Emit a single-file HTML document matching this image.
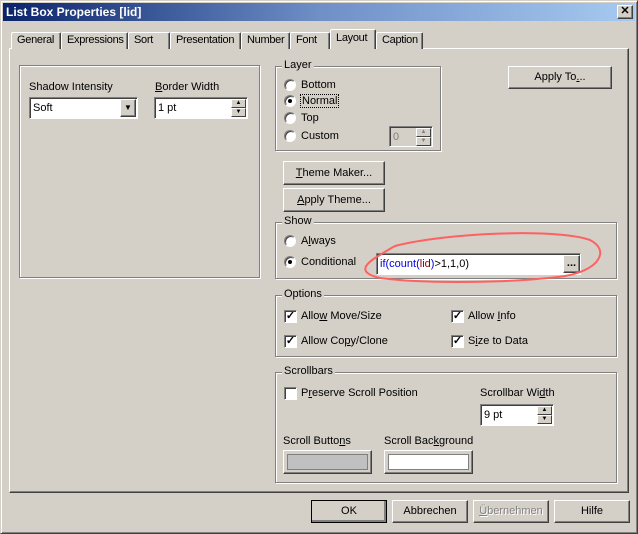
<!DOCTYPE html>
<html><head><meta charset="utf-8">
<style>
*{box-sizing:border-box;margin:0;padding:0}
body{width:638px;height:534px;overflow:hidden;background:#d4d0c8;font-family:"Liberation Sans",Tahoma,sans-serif;font-size:11px;color:#000;position:relative}
.a{position:absolute}
.win{left:0;top:0;width:638px;height:534px;border-top:1px solid #d4d0c8;border-left:1px solid #d4d0c8;border-right:1px solid #404040;border-bottom:1px solid #404040;box-shadow:inset 1px 1px 0 #fff,inset -1px -1px 0 #808080}
.title{left:3px;top:3px;width:632px;height:18px;background:linear-gradient(90deg,#0a246a,#a6caf0);color:#fff;font-weight:bold;font-size:12px;line-height:18px;padding-left:3px}
.xbtn{right:5px;top:5px;width:16px;height:14px;background:#d4d0c8;border:1px solid;border-color:#fff #404040 #404040 #fff;box-shadow:inset -1px -1px 0 #808080;font-size:11px;line-height:11px;text-align:center;font-weight:bold;color:#000}
.panel{left:9px;top:48px;width:620px;height:445px;border:1px solid;border-color:#fff #404040 #404040 #fff;box-shadow:inset -1px -1px 0 #808080}
.tab{top:32px;height:17px;border:1px solid;border-bottom:none;border-color:#fff #404040 #404040 #fff;box-shadow:inset -1px 0 0 #808080;padding:1px 0 0 5px;border-radius:2px 2px 0 0;background:#d4d0c8;letter-spacing:-0.3px;white-space:nowrap;overflow:hidden}
.tab.sel{top:29px;height:20px;z-index:2}
.grp{border:1px solid #808080;box-shadow:1px 1px 0 #fff,inset 1px 1px 0 #fff}
.lg{background:#d4d0c8;padding:0 2px;top:-8px;left:6px;position:absolute}
.btn{border:1px solid;border-color:#fff #404040 #404040 #fff;box-shadow:inset -1px -1px 0 #808080;text-align:center;background:#d4d0c8}
.sunk{border:1px solid;border-color:#808080 #fff #fff #808080;box-shadow:inset 1px 1px 0 #404040;background:#fff;padding:4px 3px 0}
.radio{width:12px;height:12px;border-radius:50%;background:#fff;border:1px solid;border-color:#808080 #fff #fff #808080;box-shadow:inset 1px 1px 0 #404040}
.radio.on::after{content:"";position:absolute;left:3px;top:3px;width:4px;height:4px;border-radius:50%;background:#000}
.cb{width:13px;height:13px;background:#fff;border:1px solid;border-color:#808080 #fff #fff #808080;box-shadow:inset 1px 1px 0 #404040;font-size:11px;line-height:10px;text-align:center;font-weight:bold}
u{text-decoration:underline}
.sb{width:15px;height:9px;border:1px solid;border-color:#fff #404040 #404040 #fff;background:#d4d0c8;font-size:6px;line-height:6px;text-align:center}
</style></head><body>
<div class="a win"></div>
<div class="a title" style="background:linear-gradient(90deg,#0a246a,#6f8fc7 50%,#a6caf0)">List Box Properties [lid]</div>
<div class="a xbtn">✕</div>

<div class="a panel"></div>
<div class="a tab" style="left:11px;width:50px">General</div>
<div class="a tab" style="left:61px;width:67px">Expressions</div>
<div class="a tab" style="left:128px;width:42px">Sort</div>
<div class="a tab" style="left:170px;width:71px">Presentation</div>
<div class="a tab" style="left:241px;width:49px">Number</div>
<div class="a tab" style="left:290px;width:40px">Font</div>
<div class="a tab sel" style="left:330px;width:46px;padding-top:2px">Layout</div>
<div class="a tab" style="left:376px;width:47px">Caption</div>

<div class="a grp" style="left:19px;top:65px;width:241px;height:213px"></div>
<div class="a" style="left:29px;top:81px">Shadow Intensity</div>
<div class="a sunk" style="left:29px;top:97px;width:109px;height:22px">Soft</div>
<div class="a btn" style="left:120px;top:99px;width:16px;height:18px;font-size:8px;line-height:16px">▼</div>
<div class="a" style="left:155px;top:81px"><u>B</u>order Width</div>
<div class="a sunk" style="left:154px;top:97px;width:94px;height:22px">1 pt</div>
<div class="a sb" style="left:231px;top:99px">▲</div>
<div class="a sb" style="left:231px;top:108px">▼</div>

<div class="a grp" style="left:275px;top:66px;width:166px;height:85px"><span class="lg">Layer</span></div>
<div class="a radio" style="left:284px;top:79px"></div><div class="a" style="left:301px;top:79px">Bottom</div>
<div class="a radio on" style="left:284px;top:95px"></div><div class="a" style="left:300px;top:94px;border:1px dotted #000;padding:0 1px">Normal</div>
<div class="a radio" style="left:284px;top:112px"></div><div class="a" style="left:301px;top:112px">Top</div>
<div class="a radio" style="left:284px;top:130px"></div><div class="a" style="left:301px;top:130px">Custom</div>
<div class="a sunk" style="left:389px;top:126px;width:44px;height:21px;background:#d4d0c8;color:#808080">0</div>
<div class="a sb" style="left:416px;top:128px;color:#808080">▲</div>
<div class="a sb" style="left:416px;top:137px;color:#808080">▼</div>

<div class="a btn" style="left:508px;top:66px;width:104px;height:23px;line-height:21px">Apply To<u>.</u>..</div>
<div class="a btn" style="left:283px;top:161px;width:102px;height:24px;line-height:22px"><u>T</u>heme Maker...</div>
<div class="a btn" style="left:283px;top:188px;width:102px;height:24px;line-height:22px"><u>A</u>pply Theme...</div>

<div class="a grp" style="left:275px;top:222px;width:342px;height:57px"><span class="lg">Show</span></div>
<div class="a radio" style="left:284px;top:235px"></div><div class="a" style="left:301px;top:235px">A<u>l</u>ways</div>
<div class="a radio on" style="left:284px;top:256px"></div><div class="a" style="left:301px;top:256px">Conditional</div>
<div class="a sunk" style="left:376px;top:253px;width:205px;height:22px"><span style="color:#0000e0">if(count(</span><span style="color:#800000">lid</span><span style="color:#0000e0">)</span>&gt;1,1,0)</div>
<div class="a btn" style="left:563px;top:255px;width:17px;height:18px;font-weight:bold;line-height:14px">...</div>
<svg class="a" style="left:355px;top:228px" width="255" height="58"><path d="M40 18 C90 5 200 0 235 12 C255 22 245 42 210 48 C160 55 70 56 25 50 C8 46 5 40 20 30 C30 24 36 20 40 18" fill="none" stroke="#ff6060" stroke-width="2"/></svg>

<div class="a grp" style="left:275px;top:295px;width:342px;height:62px"><span class="lg">Options</span></div>
<div class="a cb" style="left:284px;top:310px">✓</div><div class="a" style="left:301px;top:310px">Allo<u>w</u> Move/Size</div>
<div class="a cb" style="left:284px;top:335px">✓</div><div class="a" style="left:301px;top:335px">Allow Co<u>p</u>y/Clone</div>
<div class="a cb" style="left:451px;top:310px">✓</div><div class="a" style="left:468px;top:310px">Allow <u>I</u>nfo</div>
<div class="a cb" style="left:451px;top:335px">✓</div><div class="a" style="left:468px;top:335px">S<u>i</u>ze to Data</div>

<div class="a grp" style="left:275px;top:372px;width:342px;height:111px"><span class="lg">Scrollbars</span></div>
<div class="a cb" style="left:284px;top:387px"></div><div class="a" style="left:301px;top:387px">P<u>r</u>eserve Scroll Position</div>
<div class="a" style="left:480px;top:387px">Scrollbar Wi<u>d</u>th</div>
<div class="a sunk" style="left:480px;top:404px;width:74px;height:22px">9 pt</div>
<div class="a sb" style="left:537px;top:406px">▲</div>
<div class="a sb" style="left:537px;top:415px">▼</div>
<div class="a" style="left:283px;top:435px">Scroll Butto<u>n</u>s</div>
<div class="a btn" style="left:283px;top:450px;width:89px;height:24px;padding:3px"><div style="border:1px solid #808080;background:#c0c0c0;height:100%"></div></div>
<div class="a" style="left:384px;top:435px">Scroll Bac<u>k</u>ground</div>
<div class="a btn" style="left:384px;top:450px;width:89px;height:24px;padding:3px"><div style="border:1px solid #808080;background:#fff;height:100%"></div></div>

<div class="a btn" style="left:311px;top:500px;width:76px;height:23px;line-height:20px;outline:1px solid #000;outline-offset:-1px;box-shadow:inset -2px -2px 0 #808080">OK</div>
<div class="a btn" style="left:392px;top:500px;width:76px;height:23px;line-height:21px">Abbrechen</div>
<div class="a btn" style="left:473px;top:500px;width:76px;height:23px;line-height:21px;color:#808080;text-shadow:1px 1px 0 #fff"><u>Ü</u>bernehmen</div>
<div class="a btn" style="left:554px;top:500px;width:76px;height:23px;line-height:21px">Hilfe</div>
</body></html>
